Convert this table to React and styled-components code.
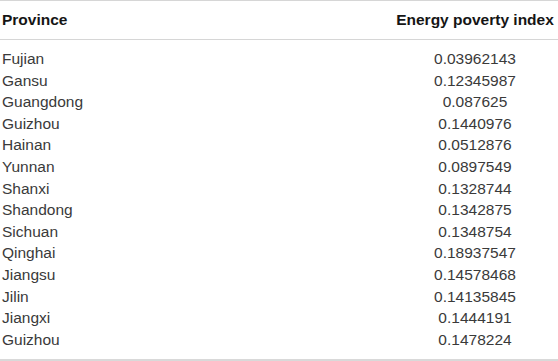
import React from 'react'
import styled, { createGlobalStyle } from 'styled-components'

const rows = [
    ['Fujian', '0.03962143'],
    ['Gansu', '0.12345987'],
    ['Guangdong', '0.087625'],
    ['Guizhou', '0.1440976'],
    ['Hainan', '0.0512876'],
    ['Yunnan', '0.0897549'],
    ['Shanxi', '0.1328744'],
    ['Shandong', '0.1342875'],
    ['Sichuan', '0.1348754'],
    ['Qinghai', '0.18937547'],
    ['Jiangsu', '0.14578468'],
    ['Jilin', '0.14135845'],
    ['Jiangxi', '0.1444191'],
    ['Guizhou', '0.1478224'],
]

const GlobalStyle = createGlobalStyle`
    body {
        margin: 0;
        background: #fff;
        font-family: "Liberation Sans", Arial, sans-serif;
    }
`

export default function App() {
    return (
        <>
            <GlobalStyle />
            <Table>
                <thead>
                    <tr>
                        <HeadCell>Province</HeadCell>
                        <HeadCell $center>Energy poverty index</HeadCell>
                    </tr>
                </thead>
                <tbody>
                    {rows.map(([name, value], i) => (
                        <Row key={i} $first={i === 0} $last={i === rows.length - 1}>
                            <Cell>{name}</Cell>
                            <Cell $center>{value}</Cell>
                        </Row>
                    ))}
                </tbody>
            </Table>
        </>
    )
}

const Table = styled.table`
    width: 558px;
    border-collapse: collapse;
    border-top: 1px solid #d6d6d6;
    border-bottom: 2px solid #d9d9d9;
    color: #3a3a3a;
    font-size: 15.5px;
`

const HeadCell = styled.th`
    height: 38px;
    padding: 0 2px;
    text-align: ${p => (p.$center ? 'center' : 'left')};
    width: ${p => (p.$center ? '162px' : 'auto')};
    font-weight: bold;
    color: #151515;
    border-bottom: 1px solid #d6d6d6;
    vertical-align: middle;
`

const Row = styled.tr`
    td {
        padding-top: ${p => (p.$first ? '8px' : '0')};
        padding-bottom: ${p => (p.$last ? '9px' : '0')};
    }
`

const Cell = styled.td`
    padding: 0 2px;
    line-height: 21.6px;
    text-align: ${p => (p.$center ? 'center' : 'left')};
    font-weight: normal;
    white-space: nowrap;
`
